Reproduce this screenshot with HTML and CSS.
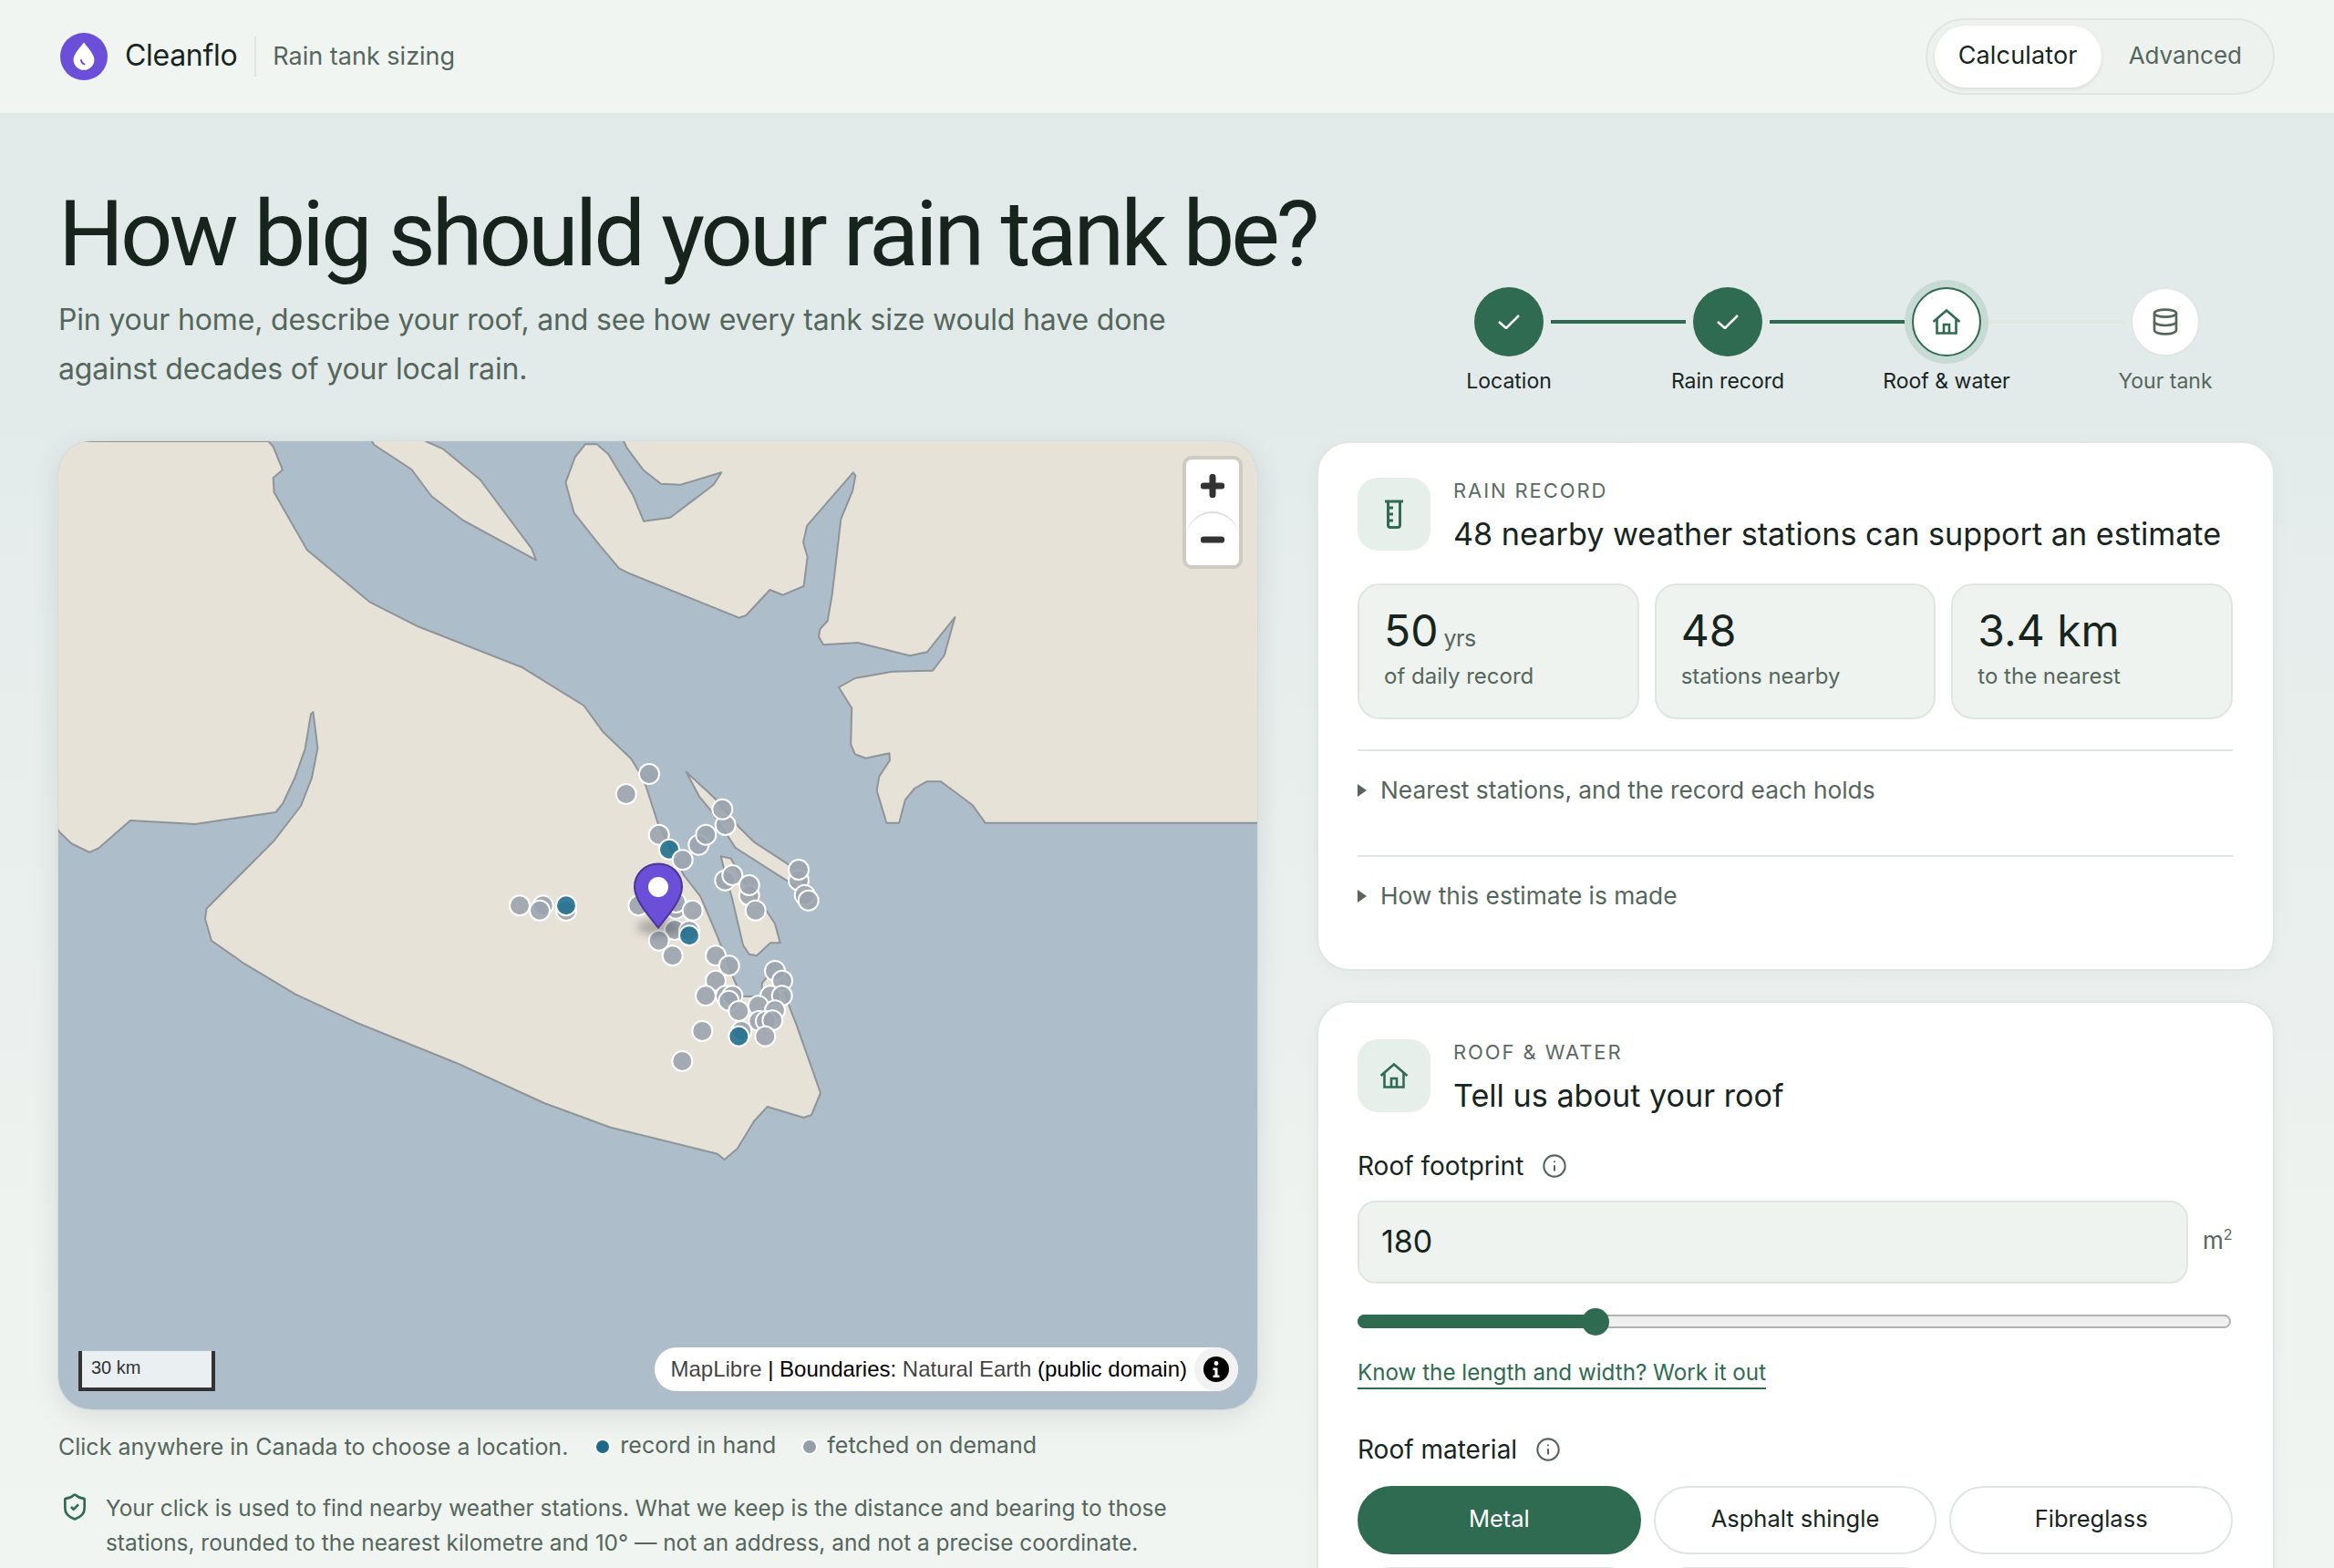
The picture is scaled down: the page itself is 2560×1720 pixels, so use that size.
FILE: index.html
```html
<!DOCTYPE html>
<html lang="en">
<head>
<meta charset="utf-8">
<title>Cleanflo – Rain tank sizing</title>
<link rel="stylesheet" href="styles.css">
</head>
<body>
<header class="topbar">
  <div class="brand">
    <svg class="brand-mark" viewBox="0 0 52 52" aria-hidden="true"><circle cx="26" cy="26" r="26" fill="#6b4fd8"/><path d="M26 10.500C22 16 14.600 23.500 14.600 29.400a11.400 11.400 0 0 0 22.800 0C37.400 23.500 30 16 26 10.500z" fill="#fff"/><path d="M23 30c.2 2.200 1.500 3.800 3.400 4.400" fill="none" stroke="#6b4fd8" stroke-width="2" stroke-linecap="round"/></svg>
    <span class="brand-name">Cleanflo</span>
    <span class="brand-sub">Rain tank sizing</span>
  </div>
  <nav class="mode">
    <span class="mode-tab is-active">Calculator</span>
    <span class="mode-tab">Advanced</span>
  </nav>
</header>

<section class="hero">
  <div class="hero-copy">
    <h1>How big should your rain tank be?</h1>
    <p>Pin your home, describe your roof, and see how every tank size would have done against decades of your local rain.</p>
  </div>
  <ol class="steps">
    <li class="step">
      <div class="rail"><i class="seg seg-none"></i><span class="dot dot-done"><svg viewBox="0 0 24 16" class="ic-check"><path d="M1 8l8 7L23 1"/></svg></span><i class="seg seg-on"></i></div>
      <span class="step-label">Location</span>
    </li>
    <li class="step">
      <div class="rail"><i class="seg seg-on"></i><span class="dot dot-done"><svg viewBox="0 0 24 16" class="ic-check"><path d="M1 8l8 7L23 1"/></svg></span><i class="seg seg-on"></i></div>
      <span class="step-label">Rain record</span>
    </li>
    <li class="step">
      <div class="rail"><i class="seg seg-on"></i><span class="dot dot-now"><svg viewBox="0 0 32 28" class="ic-house"><path d="M1.500 14L16 1.500 30.500 14M5.500 11v15.500h21V11M13 26.500V17h6v9.500"/></svg></span><i class="seg seg-off"></i></div>
      <span class="step-label">Roof &amp; water</span>
    </li>
    <li class="step step-todo">
      <div class="rail"><i class="seg seg-off"></i><span class="dot dot-todo"><svg viewBox="0 0 24 24" class="ic-db"><ellipse cx="12" cy="5" rx="9" ry="3"/><path d="M3 5v14a9 3 0 0 0 18 0V5"/><path d="M3 12a9 3 0 0 0 18 0"/></svg></span><i class="seg seg-none"></i></div>
      <span class="step-label">Your tank</span>
    </li>
  </ol>
</section>

<main class="layout">
  <section class="col-map">
    <div class="map">
      <svg class="map-art" viewBox="64 484 1315 1062" aria-label="Map">
        <rect x="64" y="484" width="1315" height="1062" fill="#adbeca"/>
        <g class="land">
          <path d="M60 480V484H294.400L299.700 490 310 515.300 299.700 524.300 300.600 540 336.800 603.300 406 660.700 458.700 687.300 572 731.700 640.400 774 661.800 803.300 692 832 700 845 708.300 861.700 721.700 903.300 750 960 768.300 983.300 786.700 1026.700 803.300 1070 813 1093 835 1093 836 1078 841.700 1071.700 855 1072 866.700 1106.700 873.300 1123.300 893.300 1180 900 1199 890 1223 881.400 1226 841.700 1214 827 1230 808.700 1260 794.600 1272 786.900 1265.700 669.600 1236.700 596.900 1210 502.300 1166.700 390.900 1121.700 324 1090.700 267.300 1056.700 231.900 1031.700 225 1008 226.500 996.700 301 921.700 330 884 342 853.300 348.400 820.700 343.500 781 341 783.300 334.600 821.700 323.400 853.300 310 881.700 302.400 891 214 904 143 900 107.800 930.700 98 935 77.900 925 65.800 913.300 60 905z"/>
          <path d="M408 480V484L410.400 488 451.500 515 473 544 507.800 570.700 588 614.300 583 601.700 526.500 526 486.300 492.700 467 484V480z"/>
          <path d="M684 480V484L687.800 491.700 706 516 725 530.700 746.400 531.700 791.300 518.300 782.700 531.700 735.200 567.700 706 571.700 694.400 543.300 667.300 498.300 654.600 487.300 641.800 487.300 630.600 501.700 620.400 529.300 629.600 562.700 658.700 599.300 679 623.300 690.800 629.300 810.700 677.700 818.400 675 844.400 647 858.700 652.700 881.600 643 885.700 610.700 881 595 885.200 576.700 935.700 518.300 938.300 521.700 935.200 538.300 922.400 569 912.800 651.700 907.700 681 899.500 690 898 698.300 903 707.300 940.800 705 998 719.300 1016.800 715.300 1047.400 677 1035.700 719 1023 735.700 978.600 736.700 937.800 744 920 754 934.200 776.700 933.200 816.700 937.800 827.300 949.500 831.700 975.500 826.300 976 834 964.300 851.700 961.700 867.300 972.400 902.700 986.200 902.700 992.900 877.300 1003 865 1016.300 857.300 1032 857.300 1066.800 883.300 1080.600 902.700H1385V480z"/>
          <path d="M752.700 846.700L783.300 875 810 906.700 826.700 923.300 865 948.300 878 960 886.700 980 866.700 968.300 806.700 930 781.700 891.700 766.700 873.300z"/>
          <path d="M790.700 939.300L801.700 941.700 810 956.700 821.700 975 836.700 993 850 1013.300 855.700 1034.300 845 1034.300 830 1048.300 821.700 1046.700 815 1036.700 803.300 986.700 793.300 950z"/>
        </g>
        <g class="st">
          <circle cx="712" cy="849" r="11"/><circle cx="686.700" cy="871" r="11"/><circle cx="722.700" cy="915.700" r="11"/>
          <circle class="st-rec" cx="734" cy="931.700" r="11"/>
          <circle cx="795.700" cy="905" r="11"/><circle cx="792.300" cy="887.700" r="11"/><circle cx="766.300" cy="926.700" r="11"/><circle cx="774.300" cy="915.700" r="11"/><circle cx="748.700" cy="943.300" r="11"/>
          <circle cx="795.300" cy="965.700" r="11"/><circle cx="803.300" cy="960" r="11"/><circle cx="821.700" cy="982.300" r="11"/><circle cx="821.700" cy="971" r="11"/><circle cx="828.700" cy="998.700" r="11"/>
          <circle cx="876" cy="965.700" r="11"/><circle cx="876" cy="954" r="11"/><circle cx="882.700" cy="981.700" r="11"/><circle cx="886.700" cy="987.700" r="11"/>
          <circle cx="570" cy="993.300" r="11"/><circle cx="595.700" cy="993.300" r="11"/><circle cx="592" cy="998.700" r="11"/><circle cx="621" cy="999" r="11"/>
          <circle class="st-rec" cx="621" cy="993.300" r="11"/>
          <circle cx="700.300" cy="993.300" r="11"/><circle cx="741.300" cy="996.700" r="11"/><circle cx="741.300" cy="990" r="11"/><circle cx="759.700" cy="998.700" r="11"/>
          <circle cx="740" cy="1020" r="11"/><circle cx="756" cy="1021" r="11"/>
          <circle class="st-rec" cx="756" cy="1026.300" r="11"/>
          <circle cx="722.700" cy="1031.700" r="11"/><circle cx="737.700" cy="1048.300" r="11"/>
          <circle cx="785" cy="1048.300" r="11"/><circle cx="799.700" cy="1059.300" r="11"/><circle cx="785" cy="1075.700" r="11"/>
          <circle cx="850" cy="1065" r="11"/><circle cx="858" cy="1075.700" r="11"/><circle cx="845" cy="1092.300" r="11"/><circle cx="857.700" cy="1092.300" r="11"/>
          <circle cx="774" cy="1092.300" r="11"/><circle cx="796" cy="1092.300" r="11"/><circle cx="803.300" cy="1092.300" r="11"/><circle cx="799.300" cy="1097.700" r="11"/>
          <circle cx="831.700" cy="1103.300" r="11"/><circle cx="810.300" cy="1109" r="11"/><circle cx="850" cy="1108.300" r="11"/><circle cx="832.300" cy="1120" r="11"/><circle cx="840" cy="1120" r="11"/><circle cx="847.300" cy="1119.300" r="11"/>
          <circle cx="813.300" cy="1131" r="11"/>
          <circle class="st-rec" cx="810.300" cy="1136.700" r="11"/>
          <circle cx="839.300" cy="1136.700" r="11"/><circle cx="770.300" cy="1131" r="11"/><circle cx="748.300" cy="1164" r="11"/>
        </g>
        <ellipse class="pin-shadow" cx="723" cy="1017" rx="24" ry="9"/>
        <path class="pin" d="M722 947.500C707 947.500 696 959 696 973C696 987 711 1004 722 1017.500C733 1004 748 987 748 973C748 959 737 947.500 722 947.500z"/>
        <circle cx="722" cy="973" r="11" fill="#fff"/>
      </svg>
      <div class="zoom">
        <span class="zoom-btn"><svg viewBox="0 0 24 24"><path d="M12 3v18M3 12h18"/></svg></span>
        <span class="zoom-btn zoom-out"><svg viewBox="0 0 24 24"><path d="M3 12h18"/></svg></span>
      </div>
      <div class="scale">30 km</div>
      <div class="attrib">
        <span class="attrib-text"><span class="soft">MapLibre</span> | Boundaries: <span class="soft">Natural Earth</span> (public domain)</span>
        <span class="attrib-btn"><svg viewBox="0 0 28 28"><circle cx="14" cy="14" r="14"/><circle cx="14" cy="7.500" r="2.400" fill="#fff"/><path d="M10.500 12.500h5v8h2v2.500h-7v-2.500h2v-5.500h-2z" fill="#fff"/></svg></span>
      </div>
    </div>
    <div class="map-note">
      <span class="note-lead">Click anywhere in Canada to choose a location.</span>
      <span class="legend"><i class="key key-rec"></i>record in hand</span>
      <span class="legend"><i class="key key-dem"></i>fetched on demand</span>
    </div>
    <div class="privacy">
      <svg viewBox="0 0 24 24" class="ic-shield"><path d="M20 13c0 5-3.500 7.500-7.660 8.950a1 1 0 0 1-.67-.01C7.500 20.500 4 18 4 13V6a1 1 0 0 1 1-1c2 0 4.500-1.200 6.240-2.720a1.170 1.170 0 0 1 1.520 0C14.510 3.810 17 5 19 5a1 1 0 0 1 1 1z"/><path d="m9 12 2 2 4-4"/></svg>
      <p>Your click is used to find nearby weather stations. What we keep is the distance and bearing to those stations, rounded to the nearest kilometre and 10° — not an address, and not a precise coordinate.</p>
    </div>
  </section>

  <section class="col-cards">
    <article class="card">
      <header class="card-head">
        <span class="tile"><svg viewBox="0 0 20 32" class="ic-gauge"><path d="M0 2h20M3.500 2v26a2.500 2.500 0 0 0 2.500 2.500h8a2.500 2.500 0 0 0 2.500-2.500V2M3.500 9H9M3.500 16H9M3.500 23H9"/></svg></span>
        <div>
          <div class="eyebrow">RAIN RECORD</div>
          <h2>48 nearby weather stations can support an estimate</h2>
        </div>
      </header>
      <div class="stats">
        <div class="stat"><div class="stat-val">50<small>yrs</small></div><div class="stat-cap">of daily record</div></div>
        <div class="stat"><div class="stat-val">48</div><div class="stat-cap">stations nearby</div></div>
        <div class="stat"><div class="stat-val">3.4 km</div><div class="stat-cap">to the nearest</div></div>
      </div>
      <details class="fold first"><summary>Nearest stations, and the record each holds</summary></details>
      <details class="fold"><summary>How this estimate is made</summary></details>
    </article>

    <article class="card card-form">
      <header class="card-head">
        <span class="tile"><svg viewBox="0 0 32 28" class="ic-house"><path d="M1.500 14L16 1.500 30.500 14M5.500 11v15.500h21V11M13 26.500V17h6v9.500"/></svg></span>
        <div>
          <div class="eyebrow">ROOF &amp; WATER</div>
          <h2>Tell us about your roof</h2>
        </div>
      </header>
      <div class="field-label first">Roof footprint <svg viewBox="0 0 24 24" class="ic-info"><circle cx="12" cy="12" r="10"/><path d="M12 16v-4M12 8h.010"/></svg></div>
      <div class="input-row">
        <input class="num" type="text" value="180" aria-label="Roof footprint">
        <span class="unit">m<sup>2</sup></span>
      </div>
      <div class="slider"><div class="slider-fill"></div><span class="slider-thumb"></span></div>
      <a class="link" href="#">Know the length and width? Work it out</a>
      <div class="field-label">Roof material <svg viewBox="0 0 24 24" class="ic-info"><circle cx="12" cy="12" r="10"/><path d="M12 16v-4M12 8h.010"/></svg></div>
      <div class="chips">
        <span class="chip is-on">Metal</span>
        <span class="chip">Asphalt shingle</span>
        <span class="chip">Fibreglass</span>
        <span class="chip"></span>
        <span class="chip"></span>
      </div>
    </article>
  </section>
</main>
</body>
</html>
```
FILE: styles.css
```css
* { box-sizing: border-box; }
html, body { margin: 0; height: 1720px; overflow: hidden; }
body {
  font-family: "Inter", "Liberation Sans", sans-serif;
  color: #17251e;
  background: linear-gradient(180deg, #e1e9e9 0%, #e3ebea 25%, #eff3f0 85%, #f1f5f1 100%);
}
h1, h2, p, ol { margin: 0; padding: 0; }

.topbar {
  height: 126px;
  padding: 0 65px 0 66px;
  display: flex;
  align-items: center;
  justify-content: space-between;
  background: #f1f5f2;
  border-bottom: 2px solid #e0e6e1;
}
.brand { display: flex; align-items: center; }
.brand-mark { width: 52px; height: 52px; margin-right: 19px; }
.brand-name { font-size: 32px; letter-spacing: -.3px; padding: 0 19px 3px 0; }
.brand-sub { font-size: 27px; color: #55665c; border-left: 2px solid #dfe5e0; padding-left: 18px; line-height: 44px; }
.mode {
  display: flex;
  gap: 4px;
  padding: 6px 8px;
  background: #eef2ee;
  border: 2px solid #dfe6e1;
  border-radius: 42px;
}
.mode-tab { height: 68px; line-height: 66px; padding: 0 26px; font-size: 26px; color: #55665c; border-radius: 34px; }
.mode-tab.is-active { padding: 0 26px; font-size: 27px; color: #17251e; background: #fff; box-shadow: 0 2px 4px rgba(30, 50, 40, .1); letter-spacing: .15px; }

.hero {
  display: flex;
  align-items: flex-end;
  justify-content: space-between;
  padding: 74px 65px 52px 64px;
}
.hero h1 { font-family: "Roboto", "Liberation Sans", sans-serif; font-size: 101px; line-height: 114px; font-weight: 400; letter-spacing: -4px; white-space: nowrap; color: #16241d; }
.hero p { width: 1240px; margin-top: 10px; font-size: 32px; line-height: 54px; letter-spacing: -.17px; color: #55665c; }
.steps { display: grid; grid-template-columns: repeat(4, 240px); list-style: none; }
.step { display: flex; flex-direction: column; align-items: center; gap: 13px; }
.rail { width: 100%; display: flex; align-items: center; gap: 8px; }
.seg { flex: 1; height: 4px; }
.seg-on { background: #2f6b50; }
.seg-off { background: #dfe7e1; }
.dot { flex: none; width: 76px; height: 76px; border-radius: 50%; display: flex; align-items: center; justify-content: center; }
.dot-done { background: #2f6b50; }
.dot-now { background: #fff; border: 2px solid #2f6b50; box-shadow: 0 0 0 8px #c8dad4; }
.dot-todo { background: #fff; border: 2px solid #e0e6e1; }
.ic-check { width: 24px; height: 16px; fill: none; stroke: #fff; stroke-width: 2.500; }
.ic-house { width: 32px; height: 28px; fill: none; stroke: #2f6b50; stroke-width: 2.600; }
.ic-db { width: 32px; height: 32px; fill: none; stroke: #55665c; stroke-width: 2; }
.step-label { font-size: 23px; line-height: 28px; color: #17251e; }
.step-todo .step-label { color: #55665c; }

.layout { display: grid; grid-template-columns: 1315px 1051px; column-gap: 65px; padding-left: 64px; }

.map {
  position: relative;
  height: 1062px;
  border-radius: 36px;
  overflow: hidden;
  box-shadow: 0 6px 30px rgba(30, 60, 50, .12), 0 0 0 1px #e0e8e4;
}
.map-art { display: block; width: 100%; height: 100%; }
.land path { fill: #e6e2d8; stroke: #8f9499; stroke-width: 2; stroke-linejoin: round; }
.st circle { fill: #9ba4ae; fill-opacity: .9; stroke: #fff; stroke-width: 2; }
.st circle.st-rec { fill: #22708f; }
.pin { fill: #6b4fd8; stroke: #4a3699; stroke-width: 2; }
.pin-shadow { fill: rgba(40, 40, 40, .3); filter: blur(5px); }
.zoom {
  position: absolute;
  top: 16px;
  right: 16px;
  width: 66px;
  height: 124px;
  background: #fff;
  background-clip: padding-box;
  border: 4px solid rgba(0, 0, 0, .1);
  border-radius: 10px;
  display: flex;
  flex-direction: column;
}
.zoom-btn { flex: 1; display: flex; align-items: center; justify-content: center; }
.zoom-btn svg { width: 26px; height: 26px; fill: none; stroke: #333; stroke-width: 6.500; stroke-linecap: round; }
.zoom-out { border-top: 2px solid #ddd; border-radius: 29px 29px 0 0; }
.scale {
  position: absolute;
  left: 22px;
  bottom: 20px;
  width: 150px;
  height: 44px;
  padding: 3px 0 0 10px;
  background: rgba(255, 255, 255, .75);
  border: 4px solid #333;
  border-top: 0;
  font: 20px/30px "Liberation Sans", sans-serif;
  color: #333;
}
.attrib {
  position: absolute;
  right: 21px;
  bottom: 20px;
  height: 48px;
  padding-left: 17px;
  display: flex;
  align-items: center;
  gap: 8px;
  background: #fff;
  border-radius: 24px;
  font: 24px/48px "Liberation Sans", sans-serif;
  color: #000;
}
.attrib-text { white-space: nowrap; }
.soft { color: rgba(0, 0, 0, .75); }
.attrib-btn { width: 48px; height: 48px; border-radius: 50%; background: #f2f2f2; display: flex; align-items: center; justify-content: center; }
.attrib-btn svg { width: 28px; height: 28px; }

.map-note { display: flex; align-items: center; margin-top: 22px; font-size: 25px; line-height: 38px; color: #55665c; }
.note-lead { margin-right: 31px; }
.legend { display: flex; align-items: center; margin-right: 30px; position: relative; top: -2px; }
.key { width: 14px; height: 14px; margin-right: 12px; border-radius: 50%; box-shadow: 0 0 0 2px #fff; position: relative; top: 2px; }
.key-rec { background: #1b6a8a; }
.key-dem { background: #939ea9; }
.privacy { display: flex; margin-top: 29px; gap: 18px; padding-left: 2px; }
.ic-shield { flex: none; width: 32px; height: 32px; margin-top: 2px; fill: none; stroke: #2f6b50; stroke-width: 2; }
.privacy p { width: 1240px; font-size: 24.400px; line-height: 38px; color: #55665c; }

.col-cards { display: flex; flex-direction: column; gap: 33px; }
.card {
  padding: 38px 44px 8px 43px;
  background: #fff;
  border: 2px solid #dfe7e2;
  border-radius: 36px;
  box-shadow: 0 4px 20px rgba(30, 60, 50, .04);
}
.card-form { padding-top: 40px; }
.card-head { display: flex; gap: 25px; height: 80px; }
.tile { flex: none; width: 80px; height: 80px; border-radius: 22px; background: #e6efea; display: flex; align-items: center; justify-content: center; }
.ic-gauge { width: 20px; height: 32px; fill: none; stroke: #2f6b50; stroke-width: 3; }
.eyebrow { margin-top: 2px; font-size: 22px; line-height: 24px; letter-spacing: 1.900px; color: #5b6b62; }
.card h2 { margin-top: 12px; font-size: 34.200px; line-height: 48px; font-weight: 400; white-space: nowrap; color: #17251e; }
.stats { display: grid; grid-template-columns: repeat(3, 1fr); gap: 17px; margin-top: 36px; }
.stat { height: 149px; padding: 20px 27px 0; background: #eef3ef; border: 2px solid #dfe6e1; border-radius: 24px; }
.stat-val { font-size: 48px; line-height: 60px; }
.stat-val small { margin-left: 6px; font-size: 25px; line-height: 1; letter-spacing: -.5px; color: #55665c; }
.stat-cap { margin-top: 2px; font-size: 24px; line-height: 36px; color: #55665c; }
.fold { padding: 24px 0 52px; border-top: 2px solid #dfe5e0; font-size: 26.300px; line-height: 38px; color: #55665c; }
.fold.first { margin-top: 33px; }
.fold:last-child { padding-bottom: 53px; }
.fold summary { list-style: none; display: flex; align-items: center; }
.fold summary::-webkit-details-marker { display: none; }
.fold summary::before {
  content: "";
  width: 0;
  height: 0;
  margin-right: 15px;
  border-left: 10px solid #55665c;
  border-top: 7px solid transparent;
  border-bottom: 7px solid transparent;
}
.field-label { display: flex; align-items: center; gap: 20px; margin-top: 48px; font-size: 28px; line-height: 36px; }
.field-label.first { margin-top: 41px; }
.ic-info { width: 28px; height: 28px; fill: none; stroke: #55665c; stroke-width: 1.800; stroke-linecap: round; }
.input-row { display: flex; align-items: center; gap: 16px; margin-top: 20px; }
.num {
  flex: none;
  width: 911px;
  height: 91px;
  padding: 0 24px 3px;
  background: #eef3ef;
  border: 2px solid #dfe6e1;
  border-radius: 20px;
  font: 34px "Inter", sans-serif;
  color: #17251e;
}
.unit { font-size: 26px; color: #55665c; position: relative; top: -2px; }
.unit sup { font-size: 16px; line-height: 0; vertical-align: 10px; }
.slider { position: relative; width: 958px; height: 15px; margin-top: 34px; background: #efefef; border: 2px solid #b2b2b2; border-radius: 8px; }
.slider-fill { width: 262px; height: 15px; margin: -2px 0 0 -2px; background: #2f6b50; border-radius: 8px 0 0 8px; }
.slider-thumb { position: absolute; left: 244px; top: -9px; width: 30px; height: 30px; border-radius: 50%; background: #2f6b50; }
.link { display: inline-block; margin-top: 33px; font-size: 24.200px; line-height: 32px; color: #2f6b50; text-decoration: none; border-bottom: 2px solid #2f6b50; }
.chips { display: grid; grid-template-columns: repeat(3, 1fr); gap: 14px 14px; margin-top: 22px; }
.chip { height: 75px; line-height: 67px; text-align: center; font-size: 25.500px; color: #17251e; background: #fff; border: 2px solid #dfe6e1; border-radius: 38px; }
.chip.is-on { color: #fff; background: #2f6b50; border-color: #2f6b50; }
```
